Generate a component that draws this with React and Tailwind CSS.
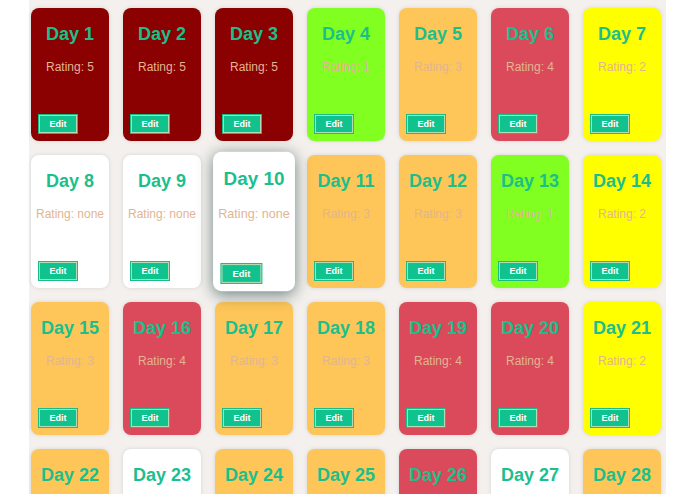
import React from "react";

const ratings = [
  5, 5, 5, 1, 3, 4, 2,
  null, null, null, 3, 3, 1, 2,
  3, 4, 3, 3, 4, 4, 2,
  3, null, 3, 3, 4, null, 3,
  2, 3, null,
];

function bgFor(r) {
  switch (r) {
    case 5:
      return "bg-[#8b0000]";
    case 4:
      return "bg-[#db4a5a]";
    case 3:
      return "bg-[#fec658]";
    case 2:
      return "bg-[#ffff00]";
    case 1:
      return "bg-[#80ff20]";
    default:
      return "bg-white";
  }
}

function Card({ day, rating }) {
  const hovered = day === 10;
  return (
    <div
      className={
        "relative flex h-[133px] w-[78px] flex-col items-center rounded-[8px] " +
        bgFor(rating) +
        (hovered
          ? " z-10 scale-105 shadow-[0_3px_14px_rgba(20,60,60,0.6)]"
          : " shadow-[0_0_4px_rgba(0,0,0,0.12)]")
      }
    >
      <div className="mt-[16px] text-[18px] font-bold leading-[21px] text-[#1cbf8c]">
        Day {day}
      </div>
      <div className="mt-[15px] whitespace-nowrap text-[12px] leading-[14px] text-[#e2b592]">
        Rating: {rating === null ? "none" : rating}
      </div>
      <div className="mb-[8px] ml-[8px] mt-auto flex h-[18px] w-[38px] items-center justify-center self-start border border-[#b4dcb4] bg-[#10c28e] shadow-[0_0_0_1px_#1dbb85]">
        <span className="text-[9px] font-semibold leading-none text-white">Edit</span>
      </div>
    </div>
  );
}

export default function App() {
  return (
    <div
      className="min-h-screen bg-white"
      style={{ fontFamily: '"Liberation Sans", Arial, sans-serif' }}
    >
      <div className="mx-auto min-h-screen w-[637px] bg-[#f4f0ed] pl-[2px] pt-[8px]">
        <div className="grid grid-cols-[repeat(7,78px)] gap-x-[14px] gap-y-[14px]">
          {ratings.map((r, i) => (
            <Card key={i} day={i + 1} rating={r} />
          ))}
        </div>
      </div>
    </div>
  );
}
